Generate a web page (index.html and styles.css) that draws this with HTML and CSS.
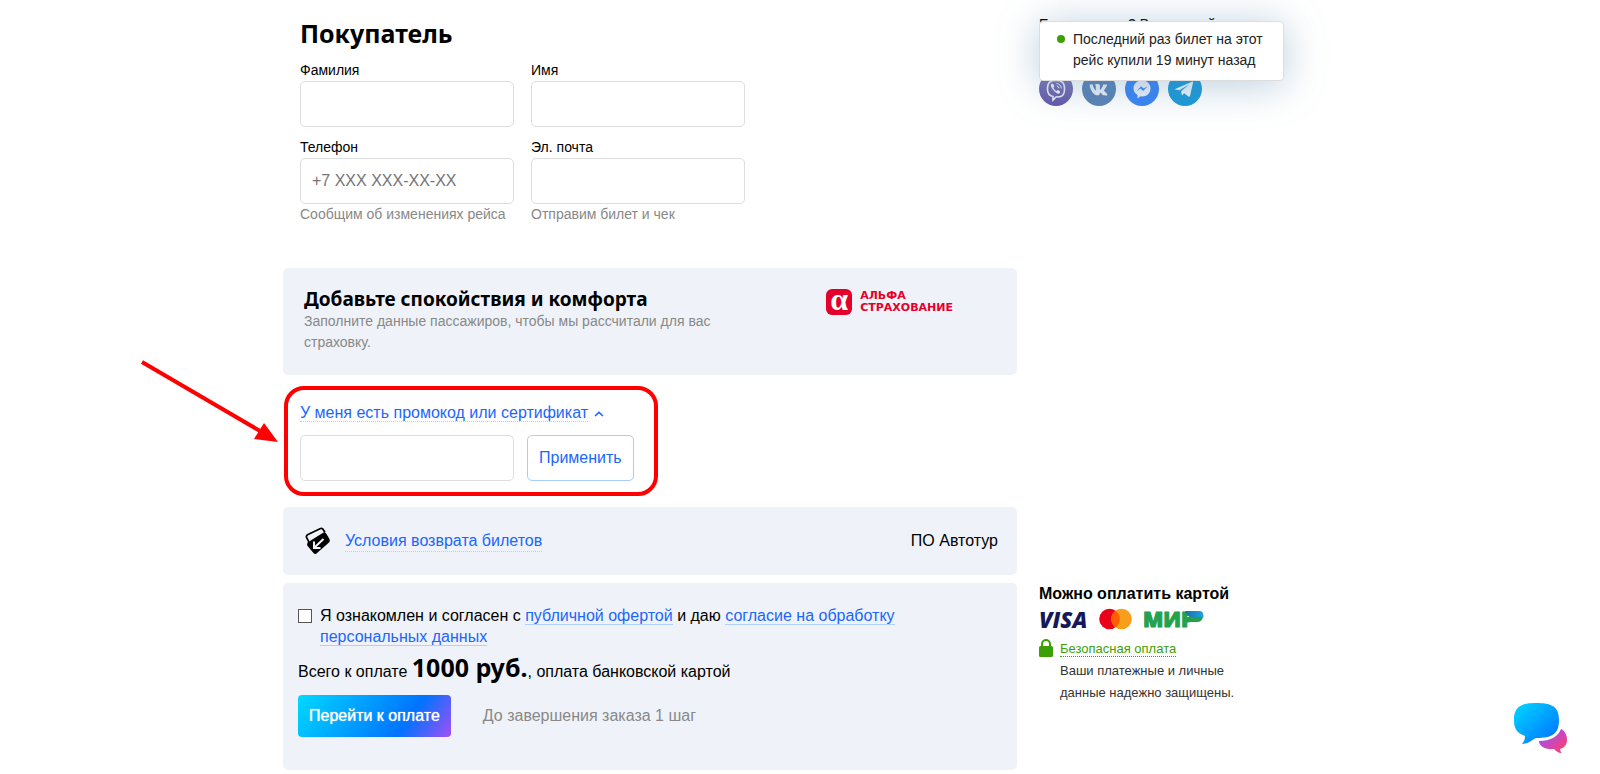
FILE: index.html
```
<!DOCTYPE html>
<html lang="ru">
<head>
    <meta charset="UTF-8">
    <meta name="viewport" content="width=device-width, initial-scale=1.0">
    <title>Оформление заказа</title>
    <link rel="stylesheet" href="styles.css">
</head>
<body>
    <div class="page">
        <main class="order">
            <!-- Покупатель -->
            <form class="buyer">
                <h2 class="buyer-title">Покупатель</h2>
                <div class="fields">
                    <div class="field">
                        <label for="surname">Фамилия</label>
                        <input class="input" type="text" id="surname">
                    </div>
                    <div class="field">
                        <label for="name">Имя</label>
                        <input class="input" type="text" id="name">
                    </div>
                    <div class="field">
                        <label for="phone">Телефон</label>
                        <input class="input" type="tel" id="phone" placeholder="+7 XXX XXX-XX-XX">
                        <span class="hint">Сообщим об изменениях рейса</span>
                    </div>
                    <div class="field">
                        <label for="email">Эл. почта</label>
                        <input class="input" type="email" id="email">
                        <span class="hint">Отправим билет и чек</span>
                    </div>
                </div>
            </form>

            <!-- Страховка -->
            <section class="panel insurance">
                <div class="insurance-text">
                    <h3>Добавьте спокойствия и комфорта</h3>
                    <p>Заполните данные пассажиров, чтобы мы рассчитали для вас страховку.</p>
                </div>
                <div class="alfa">
                    <span class="alfa-sign">α</span>
                    <span class="alfa-name">АЛЬФА<br>СТРАХОВАНИЕ</span>
                </div>
            </section>

            <!-- Промокод -->
            <section class="promo">
                <a class="link dotted" href="#promo">У меня есть промокод или сертификат</a>
                <svg class="chevron" width="10" height="6" viewBox="0 0 10 6"><path d="M1 5 L5 1.4 L9 5" fill="none" stroke="#1a66ff" stroke-width="1.6"/></svg>
                <div class="promo-row">
                    <input class="input" type="text" id="promo" aria-label="Промокод">
                    <button class="apply" type="button">Применить</button>
                </div>
                <svg class="arrow" width="140" height="84" viewBox="0 0 140 84">
                    <path d="M2 3 L120 72" stroke="#f00" stroke-width="4"/>
                    <path d="M138 83 L124 64 L114 80 Z" fill="#f00"/>
                </svg>
            </section>

            <section class="panel refund">
                <svg width="26" height="28" viewBox="0 0 26 28">
                    <path d="M4 15 L1.5 10.5 Q1 8.500 3 7.500 L15.500 1.500 Q17.500 1 18.500 3 L20 5.500" fill="none" stroke="#000" stroke-width="1.700"/>
                    <path d="M2.500 15.500 L18.500 5.500 Q20.500 5 21.500 7 L24.500 12 Q25.500 14 24 15.500 L11.500 26.500 Q10 27.500 8.500 26 L3 19.500 Q1.500 17.500 2.500 15.500Z" fill="#000"/>
                    <path d="M18.500 12 L9.500 20.500 M9 14.500 L9 21 L15.500 21" fill="none" stroke="#eff3f8" stroke-width="2"/>
                </svg>
                <a class="link dotted" href="#refund">Условия возврата билетов</a>
                <span class="carrier">ПО Автотур</span>
            </section>
        </main>

        <aside class="help">
            <p>Есть вопросы? Воспользуйтесь</p>
            <div class="socials">
                <a href="#viber" aria-label="Viber">
                    <svg width="34" height="34" viewBox="0 0 34 34">
                        <defs><linearGradient id="gv" x1="0" y1="0" x2="0" y2="1"><stop offset="0" stop-color="#7f7bb5"/><stop offset="1" stop-color="#6358a8"/></linearGradient></defs>
                        <circle cx="17" cy="17" r="17" fill="url(#gv)"/>
                        <path d="M17 8.500c5.500 0 8.500 1.500 8.500 8.500s-3 8-8.500 8l-3 3v-3.500c-4-.8-5.500-3-5.500-7.500 0-7 3-8.500 8.500-8.500z" fill="none" stroke="#e9eaf5" stroke-width="1.600"/>
                        <path d="M13 11.500c-2 1.200-1.200 3.500 1.500 6.800s5.300 4.200 6.500 2.500c.8-1.200-1.500-2.500-2.200-2.700-.6 0-.8 1-1.500.8-1.200-.5-2.500-2-2.800-3.200 0-.7 1-.8.8-1.600-.3-.9-1.400-2.900-2.300-2.600z" fill="#e9eaf5"/>
                        <path d="M17.500 11.500q4.500.5 4.800 5M17.800 14q2 .2 2.200 2.300" fill="none" stroke="#e9eaf5"/>
                    </svg>
                </a>
                <a href="#vk" aria-label="VK">
                    <svg width="34" height="34" viewBox="0 0 34 34">
                        <circle cx="17" cy="17" r="17" fill="#5b83b5"/>
                        <path d="M7.500 12.500h3.300c.7 4 2.200 5.700 3 5.900v-4.100c0-1-.3-1.300-1.200-1.600.8-1 4.800-1 5.200 0 .4 1.300-.2 4.700.4 5 1-.2 2.500-3.300 3.100-5.200h3.700c.7.500-1.500 4-3.100 6 .8 1 3.500 3.200 3.500 4.400-.3.800-3 .4-4 .3-1.200-.3-2.300-2.400-3.200-2.400-.7.200-.4 1.700-.9 2.200-.6.400-3 .4-4.300-.3-2.600-1.500-5-6-5.500-10.200z" fill="#e9eef6"/>
                    </svg>
                </a>
                <a href="#messenger" aria-label="Messenger">
                    <svg width="34" height="34" viewBox="0 0 34 34">
                        <circle cx="17" cy="17" r="17" fill="#3a85f5"/>
                        <path d="M17 8.500c5 0 8.500 3.500 8.500 8s-3.500 8-8.500 8l-1.500-.2-3 2.200v-3.500c-2.400-1.500-4-3.800-4-6.500 0-4.500 3.500-8 8.500-8z" fill="#e9f0fb"/>
                        <path d="M11.500 19l4.700-4.800 2.300 2.400 4.200-2.400-4.600 4.800-2.400-2.400z" fill="#3a85f5"/>
                    </svg>
                </a>
                <a href="#telegram" aria-label="Telegram">
                    <svg width="34" height="34" viewBox="0 0 34 34">
                        <circle cx="17" cy="17" r="17" fill="#1b9ad8"/>
                        <path d="M6.500 17.300L24.500 9.500c.5-.1.700.3.600.9L22 24c-.2.800-.8 1-1.500.5l-4.400-3.300-2.200 2.200-.8-4.200 8-6.700-9.700 5.800z" fill="#e9f4fb"/>
                    </svg>
                </a>
            </div>
        </aside>

        <!-- Итог и оплата -->
        <section class="panel total">
            <div class="agree">
                <input type="checkbox" id="agree">
                <label for="agree">Я ознакомлен и согласен с <a class="link" href="#offer">публичной офертой</a> и даю <a class="link" href="#personal">согласие на обработку персональных данных</a></label>
            </div>
            <p class="sum">Всего к оплате <strong>1000 руб.</strong>, оплата банковской картой</p>
            <div class="pay-row">
                <button class="pay" type="button">Перейти к оплате</button>
                <span class="steps">До завершения заказа 1 шаг</span>
            </div>
        </section>

        <aside class="cards">
            <h4>Можно оплатить картой</h4>
            <div class="card-logos">
                <span class="visa">VISA</span>
                <svg width="33" height="22" viewBox="0 0 33 22">
                    <circle cx="10.500" cy="11" r="10.300" fill="#eb001b"/>
                    <circle cx="22.500" cy="11" r="10.300" fill="#f79e1b"/>
                    <path d="M16.500 2.600a10.300 10.300 0 0 1 0 16.800a10.300 10.300 0 0 1 0-16.800z" fill="#ff5f00"/>
                </svg>
                <svg class="mir-logo" width="70" height="34" viewBox="0 0 70 34">
                    <defs><linearGradient id="gm" x1="0" x2="1"><stop offset="0" stop-color="#1a6fb0"/><stop offset="1" stop-color="#1fa3dc"/></linearGradient></defs>
                    <text class="mir" x="3" y="25">МИР</text>
                    <path d="M46 15h17q-1 5-6 5h-11z" fill="#23a24d"/>
                    <path d="M45 9h15q3.500 0 3.500 6h-11q-6 0-7.500-6z" fill="url(#gm)"/>
                </svg>
            </div>
            <div class="secure">
                <svg width="14" height="18" viewBox="0 0 14 18">
                    <rect x="0" y="7" width="14" height="11" rx="1.500" fill="#3c9f06"/>
                    <path d="M3 9V5a4 4 0 0 1 8 0v4" fill="none" stroke="#3c9f06" stroke-width="2"/>
                </svg>
                <div>
                    <a href="#secure">Безопасная оплата</a>
                    <p>Ваши платежные и личные данные надежно защищены.</p>
                </div>
            </div>
        </aside>

        <div class="toast">Последний раз билет на этот рейс купили 19 минут назад</div>
    </div>

    <button class="chat" type="button" aria-label="Чат">
        <svg width="54" height="52" viewBox="0 0 54 52">
            <defs>
                <linearGradient id="gb" x1="0" y1="0" x2="1" y2="1"><stop offset="0" stop-color="#00d9ff"/><stop offset="1" stop-color="#006cff"/></linearGradient>
                <linearGradient id="gp" x1="0" y1="0" x2="1" y2="1"><stop offset="0.200" stop-color="#a24ff5"/><stop offset="0.900" stop-color="#ff3e6c"/></linearGradient>
            </defs>
            <path d="M22 0C37 0 45 3 45 17S38 35 22 35C18 37 14 41 8 41C10 39 11 36 11 33C3 30 0 26 0 17C0 3 8 0 22 0Z" fill="url(#gb)"/>
            <path d="M47 26C51 28 53 32 53 37C53 42 50 45 46 46C46 48 47 49 48 50C44 50 42 48 40 46C31 47 25 43 25 38C36 38 44 34 47 26Z" fill="url(#gp)"/>
        </svg>
    </button>
</body>
</html>
```
FILE: styles.css
```
* {
    box-sizing: border-box;
}
body {
    margin: 0;
    font-family: "Liberation Sans", Arial, sans-serif;
    font-size: 16px;
    line-height: 22px;
    color: #000;
    background-color: #fff;
}
h2, h3, h4, p {
    margin: 0;
}
h2, h3, .sum strong {
    font-family: "Noto Sans", sans-serif;
    font-weight: 700;
}
.page {
    position: relative;
    display: grid;
    grid-template-columns: 1fr 278px;
    column-gap: 22px;
    row-gap: 8px;
    max-width: 1034px;
    margin: 0 auto;
    padding: 16px 0 4px;
}
.panel {
    background-color: #eff3f9;
    border-radius: 5px;
}
.link {
    color: #1a66ff;
    text-decoration: none;
    border-bottom: 1px solid #b0d0ff;
}
.dotted {
    border-bottom-style: dotted;
}

/* Покупатель */
.buyer {
    padding: 0 17px;
    margin-bottom: 43px;
}
.buyer-title {
    font-size: 25px;
    line-height: 34px;
    margin-bottom: 10px;
}
.fields {
    display: grid;
    grid-template-columns: 214px 214px;
    gap: 10px 17px;
}
.field {
    display: flex;
    flex-direction: column;
    font-size: 14px;
    line-height: 21px;
}
.input {
    width: 214px;
    height: 46px;
    padding: 0 11px;
    border: 1px solid #ddd;
    border-radius: 5px;
    background-color: #fff;
    font: inherit;
    font-size: 16px;
}
.input::placeholder {
    color: #757575;
}
.hint {
    color: #888;
}

/* Страховка */
.insurance {
    display: flex;
    justify-content: space-between;
    padding: 19px 64px 22px 21px;
}
.insurance-text {
    max-width: 430px;
}
.insurance h3 {
    font-size: 19px;
    font-weight: 700;
    line-height: 24px;
}
.insurance p {
    font-size: 14px;
    line-height: 21px;
    color: #888;
}
.alfa {
    display: flex;
    align-items: center;
    gap: 8px;
    height: 30px;
}
.alfa-sign {
    width: 26px;
    height: 26px;
    border-radius: 6px;
    background-color: #e4002b;
    color: #fff;
    font-family: "Liberation Serif", serif;
    font-size: 32px;
    font-weight: 700;
    line-height: 20px;
    text-align: center;
}
.alfa-name {
    color: #e4002b;
    font-family: "DejaVu Sans", sans-serif;
    font-size: 11px;
    font-weight: 700;
    line-height: 12px;
}

/* Промокод */
.promo {
    position: relative;
    width: fit-content;
    margin: 11px 0 11px 1px;
    padding: 12px 20px 11px 12px;
    border: 4px solid #f00;
    border-radius: 20px;
}
.chevron {
    margin: 0 0 1px 2px;
}
.promo-row {
    display: flex;
    gap: 13px;
    margin-top: 11px;
}
.apply {
    padding: 0 11px;
    border: 1px solid #a9cdff;
    border-radius: 5px;
    background-color: #fff;
    color: #1a66ff;
    font: inherit;
}
.arrow {
    position: absolute;
    right: 100%;
    top: -31px;
    margin-right: 8px;
}

.refund {
    display: flex;
    align-items: center;
    gap: 14px;
    height: 68px;
    padding: 0 19px 0 22px;
}
.refund .link {
    line-height: 20px;
}
.carrier {
    margin-left: auto;
}

/* Помощь */
.help p {
    font-size: 14px;
    line-height: 16px;
}
.socials {
    display: flex;
    gap: 9px;
    margin-top: 40px;
}
.socials svg {
    display: block;
}

/* Итог */
.total {
    padding: 22px 15px 33px;
}
.agree {
    display: flex;
    gap: 8px;
    max-width: 620px;
    line-height: 21px;
}
.agree input {
    appearance: none;
    flex: none;
    width: 14px;
    height: 14px;
    margin: 4px 0;
    border: 1px solid #555;
    background-color: #fff;
}
.sum {
    margin-top: 3px;
    line-height: 34px;
}
.sum strong {
    font-size: 25px;
}
.pay-row {
    display: flex;
    align-items: center;
    gap: 32px;
    margin-top: 6px;
}
.pay {
    height: 42px;
    padding: 0 11px;
    border: 0;
    border-radius: 4px;
    background: linear-gradient(125deg, #00d9ff 0%, #0073ff 70%, #a24ff5 100%);
    color: #fff;
    font: inherit;
    text-shadow: 0 0 1px #fff;
}
.steps {
    color: #888;
}

/* Оплата картой */
.cards h4 {
    font-size: 16px;
}
.card-logos {
    display: flex;
    align-items: center;
    gap: 12px;
    height: 24px;
    margin: 2px 0 7px;
}
.visa {
    color: #15195a;
    font-family: "Open Sans", sans-serif;
    font-size: 22px;
    font-style: italic;
    font-weight: 800;
}
.mir-logo {
    margin-left: -4px;
}
.mir {
    fill: #23a24d;
    stroke: #23a24d;
    font-family: "Open Sans", sans-serif;
    font-size: 21px;
    font-weight: 800;
}
.secure {
    display: flex;
    gap: 7px;
    font-size: 13px;
    max-width: 200px;
    color: #333;
}
.secure svg {
    flex: none;
    margin-top: 1px;
}
.secure a {
    color: #3c9f06;
    text-decoration: none;
    border-bottom: 1px dotted #3c9f06;
}

/* Уведомление поверх колонки помощи */
.toast {
    position: absolute;
    top: 21px;
    left: 756px;
    width: 245px;
    padding: 7px 16px 9px 33px;
    border: 1px solid #ddd;
    border-radius: 4px;
    background-color: #fff;
    box-shadow: 0 4px 40px rgba(80, 130, 170, 0.4);
    color: #222;
    font-size: 14px;
    line-height: 21px;
}
.toast::before {
    content: "";
    position: absolute;
    top: 13px;
    left: 17px;
    width: 8px;
    height: 8px;
    border-radius: 50%;
    background-color: #3c9f06;
}

.chat {
    position: fixed;
    right: 32px;
    bottom: 19px;
    padding: 0;
    border: 0;
    background: none;
}
.chat svg {
    display: block;
}
```
